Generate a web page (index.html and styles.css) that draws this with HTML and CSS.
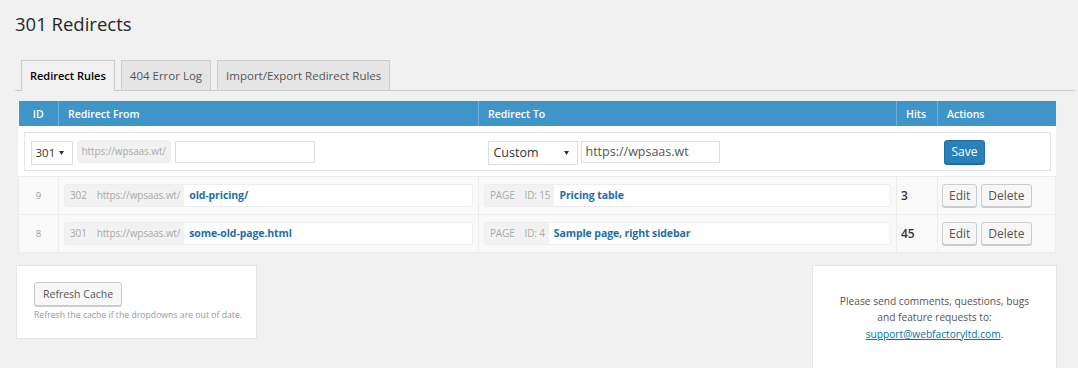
FILE: index.html
```
<!DOCTYPE html>
<html lang="en">
<head>
<meta charset="utf-8" />
<title>301 Redirects</title>
<link rel="stylesheet" href="styles.css">
</head>
<body>
	<div class="wrap">
		<h1>301 Redirects</h1>

		<div class="tabs">
			<a class="tab active" href="#">Redirect Rules</a>
			<a class="tab" href="#">404 Error Log</a>
			<a class="tab" href="#">Import/Export Redirect Rules</a>
		</div>

		<table class="rules">
			<colgroup>
				<col class="c-id" />
				<col class="c-from" />
				<col class="c-to" />
				<col class="c-hits" />
				<col class="c-actions" />
			</colgroup>
			<thead>
				<tr>
					<th class="id">ID</th>
					<th>Redirect From</th>
					<th>Redirect To</th>
					<th>Hits</th>
					<th>Actions</th>
				</tr>
			</thead>
			<tbody>
				<tr class="add-row">
					<td colspan="5">
						<div class="add-box">
							<div class="add-from">
								<select class="sel sel-status"><option>301</option><option>302</option></select>
								<span class="prefix">https://wpsaas.wt/</span>
								<input class="text text-from" type="text" />
							</div>
							<div class="add-to">
								<select class="sel sel-type"><option>Custom</option></select>
								<input class="text text-to" type="text" value="https://wpsaas.wt" />
							</div>
							<div class="add-actions">
								<button class="btn btn-primary">Save</button>
							</div>
						</div>
					</td>
				</tr>
				<tr class="rule">
					<td class="id">9</td>
					<td>
						<div class="url-box">
							<span class="muted code">302</span>
							<span class="muted">https://wpsaas.wt/</span>
							<span class="value">old-pricing/</span>
						</div>
					</td>
					<td>
						<div class="url-box">
							<span class="muted code">PAGE</span>
							<span class="muted">ID: 15</span>
							<span class="value">Pricing table</span>
						</div>
					</td>
					<td class="hits">3</td>
					<td class="actions"><button class="btn">Edit</button><button class="btn">Delete</button></td>
				</tr>
				<tr class="rule">
					<td class="id">8</td>
					<td>
						<div class="url-box">
							<span class="muted code">301</span>
							<span class="muted">https://wpsaas.wt/</span>
							<span class="value">some-old-page.html</span>
						</div>
					</td>
					<td>
						<div class="url-box">
							<span class="muted code">PAGE</span>
							<span class="muted">ID: 4</span>
							<span class="value">Sample page, right sidebar</span>
						</div>
					</td>
					<td class="hits">45</td>
					<td class="actions"><button class="btn">Edit</button><button class="btn">Delete</button></td>
				</tr>
			</tbody>
		</table>

		<div class="boxes">
			<div class="box box-cache">
				<button class="btn btn-big">Refresh Cache</button>
				<p class="desc">Refresh the cache if the dropdowns are out of date.</p>
			</div>
			<div class="box box-support">
				<p>Please send comments, questions, bugs<br />and feature requests to:<br /><a href="#">support@webfactoryltd.com</a>.</p>
			</div>
		</div>
	</div>
</body>
</html>
```

FILE: styles.css
```
body, div, p, h1, table, th, td, select, input, button {padding:0; margin:0;}
body {background:#f1f1f1; color:#444; font-family:"Segoe UI", "Open Sans", sans-serif; font-size:12px;}

.wrap {padding:0 3px 0 15px;}
h1 {font-size:18.5px; font-weight:400; line-height:29px; color:#23282d; padding:9px 0 0;}

/* tabs */
.tabs {display:flex; gap:6px; margin-top:22px; padding-left:6px; border-bottom:1px solid #ccc; height:30px;}
.tab {display:block; height:29px; line-height:29px; padding:0 8px; border:1px solid #ccc; border-bottom:none; background:#e5e5e5; color:#555; font-size:11.5px; text-decoration:none;}
.tab.active {background:#f1f1f1; color:#000; font-weight:600; font-size:11px; height:30px; margin-bottom:-1px;}

/* table */
.rules {width:1037px; margin:10px 0 0 3px; border-collapse:collapse; background:#fff; table-layout:fixed;}
.c-id {width:40px;}
.c-from {width:420px;}
.c-to {width:418px;}
.c-hits {width:41px;}
.c-actions {width:118px;}
.rules th {background:#4095c8; color:#fff; font-weight:600; font-size:10.5px; text-align:left; height:25px; padding:0 9px; border-left:1px solid #6cb0da;}
.rules th:first-child {border-left:none;}
.rules th.id {text-align:center;}

.add-row td {padding:6px 5px 5px;}
.add-box {display:grid; grid-template-columns:455px 459px 1fr; align-items:center; height:37px; border:1px solid #e5e5e5;}
.add-from, .add-to {display:flex; align-items:center; gap:4px;}
.add-from {padding-left:6px;}
.add-to {padding-left:8px;}
.add-to .sel {margin-right:-1px;}
.add-actions {padding-left:5px;}

.sel {appearance:none; -webkit-appearance:none; height:24px; border:1px solid #ddd; background:#fff url("data:image/svg+xml,%3Csvg xmlns='http://www.w3.org/2000/svg' width='5' height='4'%3E%3Cpath d='M0 0h5L2.5 4z' fill='%23333'/%3E%3C/svg%3E") no-repeat right 8px center; font-family:inherit; font-size:12.5px; color:#333; padding:0 0 0 5px; margin-top:2px;}
.sel-status {width:42px; font-size:11.5px; padding-left:4px;}
.sel-type {width:90px;}
.prefix {display:block; height:23px; line-height:22px; padding:0 5px; background:#f1f1f1; border-radius:3px; color:#aaa; font-size:10px; letter-spacing:-0.1px;}
.text {height:22px; border:1px solid #ddd; font-family:inherit; font-size:12.5px; color:#555; padding:0 4px; box-sizing:border-box;}
.text-from {width:140px;}
.text-to {width:139px;}

.rule td {background:#f9f9f9; border:1px solid #ececec; height:37px; padding:0 5px; vertical-align:middle;}
.rule td.id {text-align:center; color:#999; font-size:9.5px;}
.url-box {display:flex; height:21px; line-height:20px; background:#f2f2f2; border:1px solid #eee; border-radius:3px; font-size:10px; overflow:hidden;}
.url-box .muted {color:#aaa; padding:0 4px; letter-spacing:-0.15px;}
.url-box .code {padding-left:5px; padding-right:6px;}
.url-box .value {flex:1; background:#fff; color:#1e6ea7; font-weight:700; font-size:10.5px; padding:0 5px; letter-spacing:-0.1px;}
.rule td.hits {font-weight:600; color:#333; padding-left:4px;}
.rule td.actions {padding-left:4px; white-space:nowrap;}

.btn {height:23px; padding:0 6px; border:1px solid #ccc; border-radius:3px; background:#f7f7f7; box-shadow:0 1px 0 #ccc; color:#555; font-family:inherit; font-size:12px; cursor:pointer; margin-right:4px;}
.btn-primary {height:24px; background:#2b80ba; border-color:#1f6fa5; box-shadow:0 1px 0 #1b6a9e; color:#fff; padding:0 7px;}
.btn-big {height:24px; font-size:10.5px; padding:0 8px;}

/* bottom */
.boxes {display:flex; justify-content:space-between; align-items:flex-start; width:1041px; margin:12px 0 0 1px;}
.box {background:#fff; border:1px solid #e5e5e5; box-sizing:border-box;}
.box-cache {width:241px; height:74px; padding:16px 17px 0;}
.desc {margin-top:2px; color:#999; font-size:8.7px; line-height:15px; white-space:nowrap;}
.box-support {width:245px; height:110px; padding-top:27px; text-align:center; color:#555; font-size:10.2px; line-height:16.3px;}
.box-support a {color:#0073aa;}
```
